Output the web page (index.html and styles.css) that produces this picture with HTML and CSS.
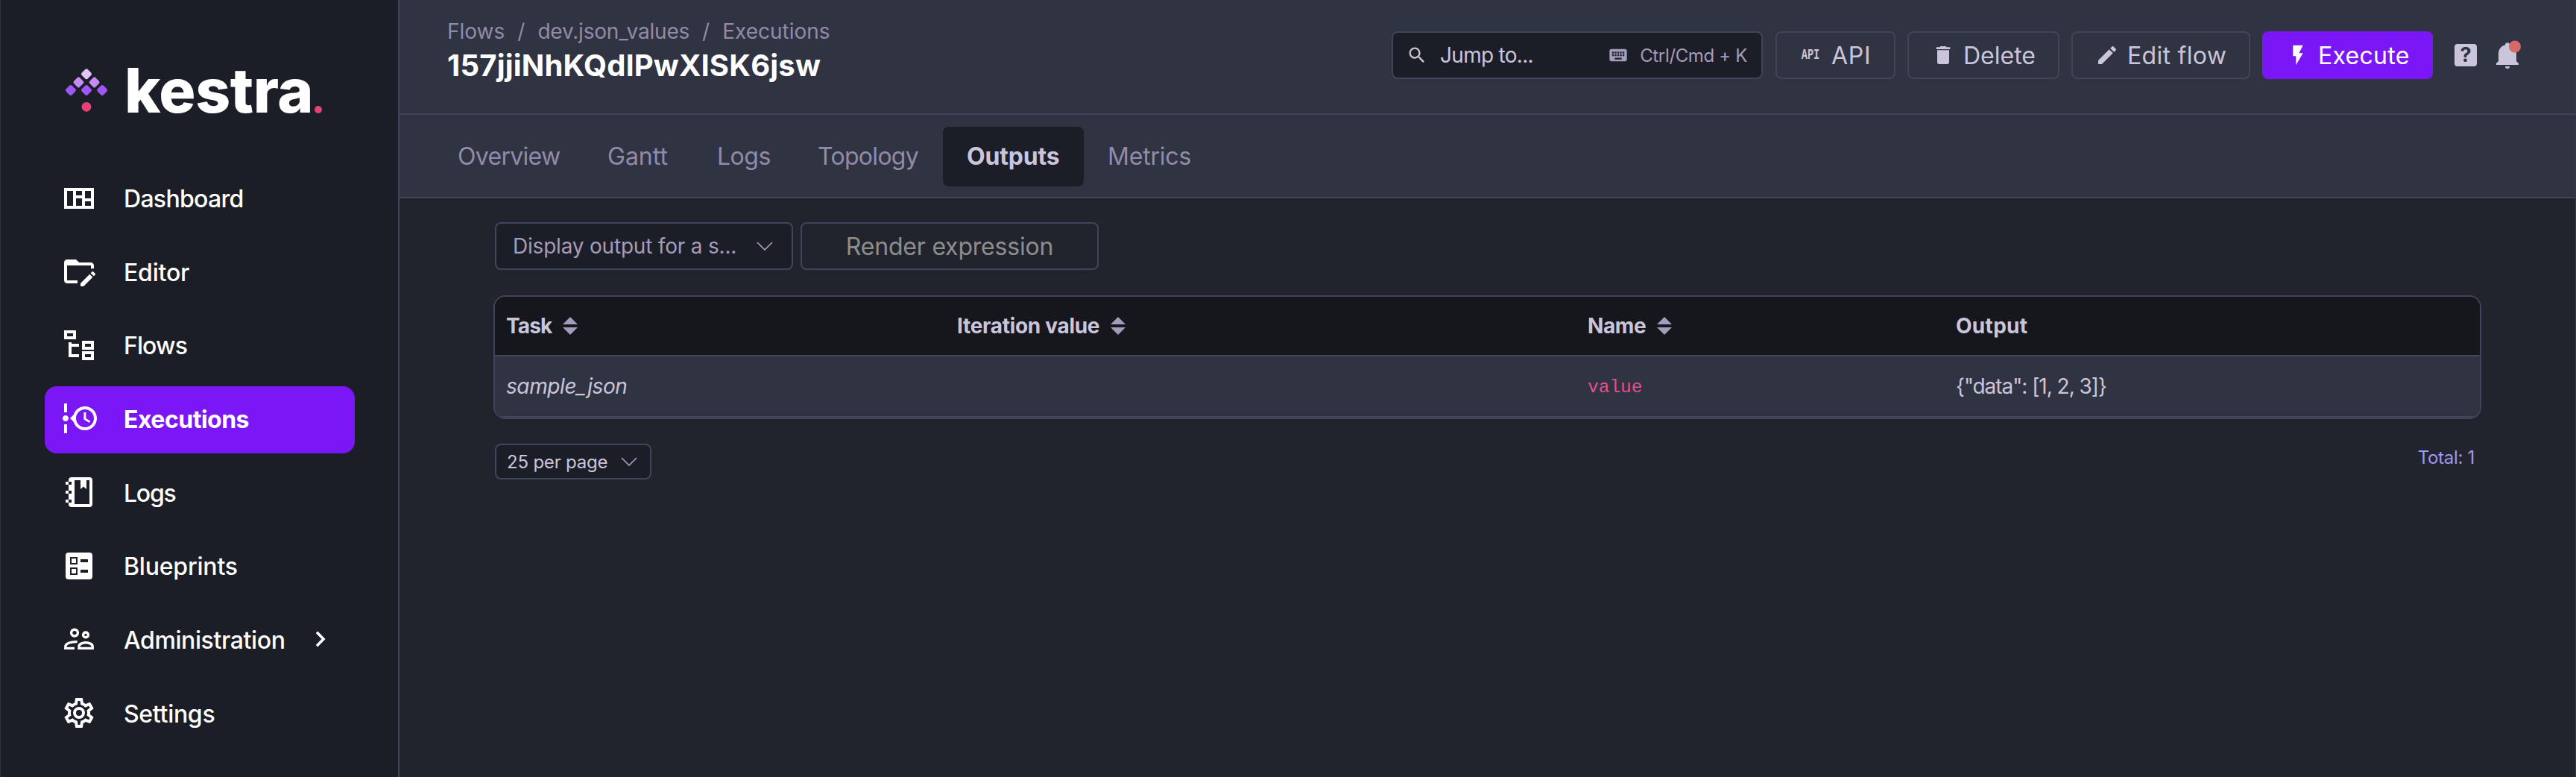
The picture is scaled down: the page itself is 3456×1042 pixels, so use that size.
FILE: index.html
```
<!DOCTYPE html>
<html lang="en">
<head>
<meta charset="utf-8">
<title>Executions</title>
<link rel="stylesheet" href="styles.css">
</head>
<body>
<div class="app">
  <aside class="sidebar">
    <div class="logo">
      <svg class="logo-mark" viewBox="0 0 60 64">
        <g transform="translate(30 13.3)" fill="#e3c3fd"><rect class="gem" x="-5.6" y="-5.6" width="11.2" height="11.2" rx="2.4"/></g>
        <g fill="#c68bf9">
          <g transform="translate(19.4 24.4)"><rect class="gem" x="-5.6" y="-5.6" width="11.2" height="11.2" rx="2.4"/></g>
          <g transform="translate(40.6 24.4)"><rect class="gem" x="-5.6" y="-5.6" width="11.2" height="11.2" rx="2.4"/></g>
        </g>
        <g fill="#9f56f6">
          <g transform="translate(8.9 35)"><rect class="gem" x="-5.6" y="-5.6" width="11.2" height="11.2" rx="2.4"/></g>
          <g transform="translate(30 35)"><rect class="gem" x="-5.6" y="-5.6" width="11.2" height="11.2" rx="2.4"/></g>
          <g transform="translate(51.1 35)"><rect class="gem" x="-5.6" y="-5.6" width="11.2" height="11.2" rx="2.4"/></g>
        </g>
        <circle cx="30" cy="57.3" r="6.4" fill="#e34275"/>
      </svg>
      <span class="logo-text">kestra</span>
      <span class="logo-dot"></span>
    </div>
    <nav class="menu">
      <a class="item"><svg class="icon" viewBox="0 0 24 24"><path fill-rule="evenodd" d="M2 5H22V19H2ZM4 7V17H8V7ZM10 7V10H14V7ZM10 12V17H14V12ZM16 7V12H20V7ZM16 14V17H20V14Z"/></svg><span class="ls-m7">Dashboard</span></a>
      <a class="item"><svg class="icon" viewBox="0 0 24 24"><path d="M4 18H11V20H4C2.9 20 2 19.11 2 18V6C2 4.89 2.89 4 4 4H10L12 6H20C21.1 6 22 6.89 22 8V10.17C21.74 10.06 21.46 10 21.17 10C20.75 10 20.36 10.11 20 10.3V8H4V18M22.85 13.47L21.53 12.15C21.33 11.95 21 11.95 20.81 12.15L19.83 13.13L21.87 15.17L22.85 14.19C23.05 14 23.05 13.67 22.85 13.47M13 19.96V22H15.04L21.17 15.88L19.13 13.83L13 19.96Z"/></svg><span class="ls-m2">Editor</span></a>
      <a class="item"><svg class="icon" viewBox="0 0 24 24"><path fill-rule="evenodd" d="M2 2H10V8H2ZM4 4V6H8V4ZM14 9H22V15H14ZM16 11V13H20V11ZM14 16H22V22H14ZM16 18V20H20V18ZM5 10H7V11H12V13H7V18H12V20H5Z"/></svg><span class="ls-m9">Flows</span></a>
      <a class="item active"><svg class="icon" viewBox="0 0 24 24"><path fill-rule="evenodd" d="M4 2V8H2V2H4M2 22V16H4V22H2M5 12C5 13.11 4.11 14 3 14S1 13.11 1 12 1.9 10 3 10 5 10.9 5 12M16 4C20.42 4 24 7.58 24 12S20.42 20 16 20C12.4 20 9.36 17.62 8.35 14.35L6 12L8.35 9.65C9.36 6.38 12.4 4 16 4M16 6C12.69 6 10 8.69 10 12S12.69 18 16 18 22 15.31 22 12 19.31 6 16 6M15.2 8H16.7V12.1L19.6 13.8L18.9 15L15.2 12.8Z"/></svg><span class="ls-m5">Executions</span></a>
      <a class="item"><svg class="icon" viewBox="0 0 24 24"><path fill-rule="evenodd" d="M7 2H19A2 2 0 0 1 21 4V20A2 2 0 0 1 19 22H7A2 2 0 0 1 5 20V19H3V17H5V13H3V11H5V7H3V5H5V4A2 2 0 0 1 7 2M5 5V7H7V5ZM5 11V13H7V11ZM5 17V19H7V17ZM9 4V20H19V4H17V10L15 8.3L13 10V4Z"/></svg><span class="ls-m12">Logs</span></a>
      <a class="item"><svg class="icon" viewBox="0 0 24 24"><path fill-rule="evenodd" d="M5 3H19A2 2 0 0 1 21 5V19A2 2 0 0 1 19 21H5A2 2 0 0 1 3 19V5A2 2 0 0 1 5 3M6 6V11H11V6ZM7 7H10V10H7ZM6 13V18H11V13ZM7 14H10V17H7ZM13 7.5V9.5H18V7.5ZM13 14.5V16.5H18V14.5Z"/></svg><span class="ls-m2">Blueprints</span></a>
      <a class="item"><svg class="icon line" viewBox="0 0 24 24"><circle cx="9" cy="7.8" r="2.2"/><circle cx="16.5" cy="9.2" r="1.7"/><path d="M9 18.2H2.9V17C2.9 15 6.2 13.7 10.8 13.8M12 18.2V17C12 15.3 14.4 14.4 16.5 14.4S21.1 15.3 21.1 17V18.2Z"/></svg><span class="ls-m4">Administration</span><svg class="caret" viewBox="0 0 14 22"><path d="M2 1.8L11 11L2 20.2"/></svg></a>
      <a class="item"><svg class="icon" viewBox="0 0 24 24"><path d="M12,8A4,4 0 0,1 16,12A4,4 0 0,1 12,16A4,4 0 0,1 8,12A4,4 0 0,1 12,8M12,10A2,2 0 0,0 10,12A2,2 0 0,0 12,14A2,2 0 0,0 14,12A2,2 0 0,0 12,10M10,22C9.75,22 9.54,21.82 9.5,21.58L9.13,18.93C8.5,18.68 7.96,18.34 7.44,17.94L4.95,18.95C4.73,19.03 4.46,18.95 4.34,18.73L2.34,15.27C2.21,15.05 2.27,14.78 2.46,14.63L4.57,12.97L4.5,12L4.57,11L2.46,9.37C2.27,9.22 2.21,8.95 2.34,8.73L4.34,5.27C4.46,5.05 4.73,4.96 4.95,5.05L7.44,6.05C7.96,5.66 8.5,5.32 9.13,5.07L9.5,2.42C9.54,2.18 9.75,2 10,2H14C14.25,2 14.46,2.18 14.5,2.42L14.87,5.07C15.5,5.32 16.04,5.66 16.56,6.05L19.05,5.05C19.27,4.96 19.54,5.05 19.66,5.27L21.66,8.73C21.79,8.95 21.73,9.22 21.54,9.37L19.43,11L19.5,12L19.43,13L21.54,14.63C21.73,14.78 21.79,15.05 21.66,15.27L19.66,18.73C19.54,18.95 19.27,19.04 19.05,18.95L16.56,17.95C16.04,18.34 15.5,18.68 14.87,18.93L14.5,21.58C14.46,21.82 14.25,22 14,22H10M11.25,4L10.88,6.61C9.68,6.86 8.62,7.5 7.85,8.39L5.44,7.35L4.69,8.65L6.8,10.2C6.4,11.37 6.4,12.64 6.8,13.8L4.68,15.36L5.43,16.66L7.86,15.62C8.63,16.5 9.68,17.14 10.87,17.38L11.24,20H12.76L13.13,17.39C14.32,17.14 15.37,16.5 16.14,15.62L18.57,16.66L19.32,15.36L17.2,13.81C17.6,12.64 17.6,11.37 17.2,10.2L19.31,8.65L18.56,7.35L16.15,8.39C15.38,7.5 14.32,6.86 13.12,6.62L12.75,4H11.25Z"/></svg><span class="ls-m3">Settings</span></a>
    </nav>
  </aside>

  <main class="main">
    <header class="topbar">
      <div class="heading">
        <div class="crumbs"><span>Flows</span><i>/</i><span class="ls-m2">dev.json_values</span><i>/</i><span>Executions</span></div>
        <h1>157jjiNhKQdlPwXlSK6jsw</h1>
      </div>
      <div class="actions">
        <div class="search">
          <svg class="icon-s" viewBox="0 0 24 24"><path d="M9.5,3A6.5,6.5 0 0,1 16,9.5C16,11.11 15.41,12.59 14.44,13.73L14.71,14H15.5L20.5,19L19,20.5L14,15.5V14.71L13.73,14.44C12.59,15.41 11.11,16 9.5,16A6.5,6.5 0 0,1 3,9.5A6.5,6.5 0 0,1 9.5,3M9.5,5C7,5 5,7 5,9.5C5,12 7,14 9.5,14C12,14 14,12 14,9.5C14,7 12,5 9.5,5Z"/></svg>
          <span class="jump">Jump to...</span>
          <svg class="icon-s kbd" viewBox="0 0 24 24"><path d="M19,10H17V8H19M19,13H17V11H19M16,10H14V8H16M16,13H14V11H16M16,17H8V15H16M7,10H5V8H7M7,13H5V11H7M8,11H10V13H8M8,8H10V10H8M11,11H13V13H11M11,8H13V10H11M20,5H4C2.89,5 2,5.89 2,7V17A2,2 0 0,0 4,19H20A2,2 0 0,0 22,17V7C22,5.89 21.1,5 20,5Z"/></svg>
          <span class="keys">Ctrl/Cmd + K</span>
        </div>
        <button class="btn btn-api"><span class="api-icon">API</span><span class="ls-p7">API</span></button>
        <button class="btn btn-delete"><svg viewBox="0 0 24 24"><path d="M19,4H15.5L14.5,3H9.5L8.5,4H5V6H19M6,19A2,2 0 0,0 8,21H16A2,2 0 0,0 18,19V7H6V19Z"/></svg><span>Delete</span></button>
        <button class="btn btn-edit"><svg viewBox="0 0 24 24"><path d="M20.71,7.04C21.1,6.65 21.1,6 20.71,5.63L18.37,3.29C18,2.9 17.35,2.9 16.96,3.29L15.12,5.12L18.87,8.87M3,17.25V21H6.75L17.81,9.93L14.06,6.18L3,17.25Z"/></svg><span class="ls-p3">Edit flow</span></button>
        <button class="btn btn-execute"><svg viewBox="0 0 24 24"><path d="M7,2V13H10V22L17,10H13L17,2H7Z"/></svg><span class="ls-p3">Execute</span></button>
        <span class="help">?</span>
        <svg class="bell" viewBox="0 0 34 40"><path d="M12 6.2A3 3 0 0 1 18 6.2C23.500 7.500 27 12 27 18V28L30 31V33H0V31L3 28V18C3 12 6.500 7.500 12 6.200ZM12 35H18A3 3 0 0 1 12 35Z"/><circle cx="25" cy="8.500" r="8" fill="#d46a69"/></svg>
      </div>
    </header>

    <div class="tabs">
      <a class="tab tab-overview ls-m7">Overview</a>
      <a class="tab tab-gantt">Gantt</a>
      <a class="tab tab-logs ls-m5">Logs</a>
      <a class="tab tab-topology ls-m7">Topology</a>
      <a class="tab tab-outputs ls-m2">Outputs</a>
      <a class="tab ls-m2">Metrics</a>
    </div>

    <section class="content">
      <div class="filters">
        <div class="select"><span class="ls-m2">Display output for a s...</span><svg class="chev" viewBox="0 0 22 12"><path d="M1 1L11 11L21 1"/></svg></div>
        <button class="render ls-m2">Render expression</button>
      </div>
      <div class="table">
        <div class="row head">
          <div class="cell"><span class="ls-m8">Task</span><span class="sort"></span></div>
          <div class="cell"><span class="ls-m3">Iteration value</span><span class="sort"></span></div>
          <div class="cell"><span class="ls-m4">Name</span><span class="sort"></span></div>
          <div class="cell"><span class="ls-p3">Output</span></div>
        </div>
        <div class="row body">
          <div class="cell"><em class="ls-m4">sample_json</em></div>
          <div class="cell"></div>
          <div class="cell"><code>value</code></div>
          <div class="cell"><span class="ls-m10">{"data": [1, 2, 3]}</span></div>
        </div>
      </div>
      <div class="pager">
        <div class="page-size"><span class="ls-m2">25 per page</span><svg class="chev" viewBox="0 0 22 12"><path d="M1 1L11 11L21 1"/></svg></div>
        <span class="total ls-m3">Total: 1</span>
      </div>
    </section>
  </main>
</div>
</body>
</html>
```
FILE: styles.css
```
* { box-sizing: border-box; }
body {
  margin: 0;
  background: #21242d;
  color: #cac5da;
  font-family: "Inter", "Liberation Sans", sans-serif;
  font-size: 28px;
}
svg { display: block; flex: none; fill: currentColor; }
button { font: inherit; margin: 0; }
span, em, a, h1 { white-space: nowrap; }

.ls-m2 { letter-spacing: -.2px; }
.ls-m3 { letter-spacing: -.3px; }
.ls-m4 { letter-spacing: -.4px; }
.ls-m5 { letter-spacing: -.5px; }
.ls-m7 { letter-spacing: -.7px; }
.ls-m8 { letter-spacing: -.85px; }
.ls-m9 { letter-spacing: -.9px; }
.ls-m10 { letter-spacing: -1.03px; }
.ls-m12 { letter-spacing: -1.25px; }
.ls-p3 { letter-spacing: .3px; }
.ls-p7 { letter-spacing: .7px; }

.app { display: flex; height: 1042px; border-right: 1px solid #343744; }

/* Sidebar */
.sidebar {
  width: 536px;
  flex: none;
  padding: 86px 58px 0 59px;
  background: #1c1e27;
  border-left: 1px solid #30333c;
  border-right: 2px solid #404559;
}
.logo { display: flex; height: 70px; padding-left: 26px; color: #fff; }
.logo-mark { width: 60px; height: 64px; }
.gem { transform: rotate(45deg); }
.logo-text { margin: -14px 0 0 21px; font-size: 82px; font-weight: 800; line-height: 100px; letter-spacing: -.4px; }
.logo-dot { width: 10px; height: 10px; margin: 56px 0 0 2px; border-radius: 50%; background: #e34275; }
.menu { display: flex; flex-direction: column; gap: 8.67px; margin-top: 66px; }
.item {
  display: flex;
  align-items: center;
  height: 90px;
  padding: 0 0 3px 22px;
  border-radius: 16px;
  color: #fff;
  font-size: 32px;
  font-weight: 500;
}
.item span { padding-top: 2px; }
.item.active { background: #7b16f7; font-weight: 700; }
.icon { width: 48px; height: 48px; margin-right: 36px; }
.line { fill: none; stroke: currentColor; stroke-width: 1.7; }
.caret { width: 14px; height: 22px; margin-left: 41px; fill: none; stroke: currentColor; stroke-width: 3.6; }

/* Top bar */
.main { flex: 1; display: flex; flex-direction: column; min-width: 0; }
.topbar {
  display: flex;
  justify-content: space-between;
  height: 154px;
  padding: 24px 72px 0 64px;
  background: #2f3342;
  border-bottom: 2px solid #404559;
}
.crumbs { display: flex; gap: 17px; line-height: 36px; color: #918ba9; }
.crumbs i { font-style: normal; }
h1 { margin: 1px 0 0; color: #fff; font-size: 40px; font-weight: 700; line-height: 54px; letter-spacing: .2px; }
.actions { display: flex; align-items: center; height: 64px; margin-top: 18px; }
.search {
  display: flex;
  align-items: center;
  width: 498px;
  height: 64px;
  margin-right: 17px;
  padding: 0 19px 0 18px;
  background: #1c1e27;
  border: 2px solid #404559;
  border-radius: 8px;
}
.icon-s { width: 28px; height: 28px; }
.jump { margin-left: 17px; letter-spacing: -.7px; }
.kbd { margin-left: auto; color: #a49cbc; }
.keys { margin-left: 15px; color: #a49cbc; font-size: 24px; letter-spacing: -.35px; }
.btn {
  display: flex;
  align-items: center;
  gap: 11px;
  height: 64px;
  margin-right: 16px;
  padding: 0 0 0 30px;
  background: transparent;
  border: 2px solid #404559;
  border-radius: 8px;
  color: #cac5da;
  font-size: 32px;
}
.btn svg { width: 32px; height: 32px; }
.btn-api { width: 161px; }
.btn-delete { width: 204px; }
.btn-edit { width: 240px; }
.btn-execute { width: 229px; margin-right: 29px; background: #7b16f7; border-color: #7b16f7; color: #fff; }
.api-icon {
  width: 32px;
  padding-left: 4px;
  font: 700 20px/32px "Liberation Mono", monospace;
  transform: scaleX(.68);
  transform-origin: left;
}
.help {
  width: 30px;
  height: 30px;
  margin-right: 26px;
  border-radius: 4px;
  background: #cac5da;
  color: #2f3342;
  font-size: 27px;
  font-weight: 700;
  line-height: 30px;
  text-align: center;
}
.bell { width: 34px; height: 40px; }

/* Tabs */
.tabs {
  display: flex;
  align-items: center;
  height: 112px;
  padding: 2px 0 0 46px;
  background: #2f3342;
  border-bottom: 2px solid #404559;
}
.tab { height: 80px; padding-left: 32px; border-radius: 8px; color: #918ba9; font-size: 32px; line-height: 80px; }
.tab-overview { width: 201px; }
.tab-gantt { width: 147px; }
.tab-logs { width: 135px; }
.tab-topology { width: 200px; }
.tab-outputs { width: 189px; background: #1c1e27; color: #cac5da; font-weight: 700; }

/* Outputs */
.content { padding: 32px 126px 0; }
.filters { display: flex; gap: 10px; padding-left: 2px; }
.select, .page-size {
  display: flex;
  align-items: center;
  justify-content: space-between;
  background: #1c1e27;
  border: 2px solid #404559;
  border-radius: 8px;
}
.select { width: 400px; height: 64px; padding: 0 25px 0 22px; color: #a49cbc; }
.chev { width: 22px; height: 12px; fill: none; stroke: #a49cbc; stroke-width: 1.7; }
.render {
  width: 400px;
  height: 64px;
  background: transparent;
  border: 2px solid #404559;
  border-radius: 8px;
  color: #8d8d8e;
  font-size: 32px;
}
.table {
  width: 2667px;
  margin-top: 34px;
  overflow: hidden;
  border: 2px solid #404559;
  border-radius: 16px;
}
.row { display: grid; grid-template-columns: 605px 846px 494px 1fr; border-bottom: 2px solid #404559; }
.head { height: 80px; background: #16171d; font-weight: 700; }
.body { height: 82px; background: #2f3342; }
.cell { display: flex; align-items: center; gap: 15px; padding-left: 15px; }
.body .cell { padding-bottom: 1px; }
.sort { display: flex; flex-direction: column; gap: 4px; }
.sort::before, .sort::after { content: ""; border: 10px solid transparent; border-top-width: 0; border-bottom: 10px solid #a49cbc; }
.sort::after { border-bottom-width: 0; border-top: 10px solid #a49cbc; }
code { padding-top: 4px; color: #e3508d; font: 24.500px "Liberation Mono", monospace; }
.pager { display: flex; justify-content: space-between; width: 2667px; margin-top: 33px; padding: 0 9px 0 2px; font-size: 24px; }
.page-size { width: 210px; height: 48px; padding: 0 17px 0 14px; }
.total { color: #9d97f5; line-height: 38px; }
```
